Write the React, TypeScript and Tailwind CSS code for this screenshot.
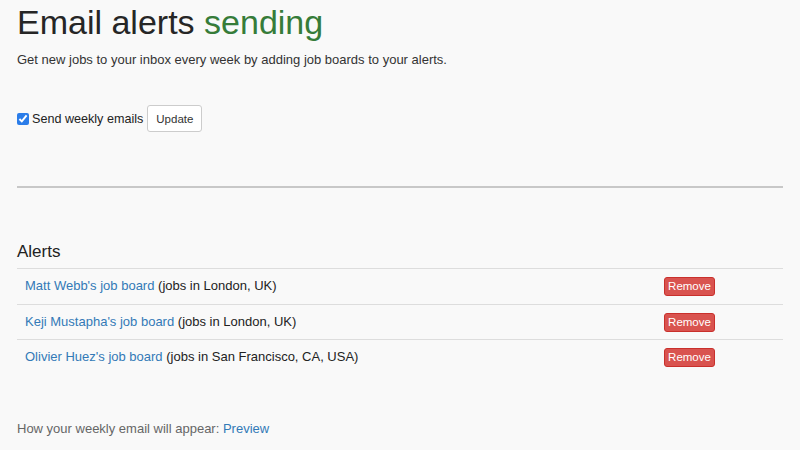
const ALERTS = [
  { name: "Matt Webb's job board", where: 'London, UK' },
  { name: "Keji Mustapha's job board", where: 'London, UK' },
  { name: "Olivier Huez's job board", where: 'San Francisco, CA, USA' },
];

export default function App() {
  return (
    <div
      className="min-h-[450px] w-full bg-[#f9f9f9] px-[17px] text-[13px] leading-[20px] text-[#333]"
      style={{ fontFamily: '"Liberation Sans", Arial, sans-serif' }}
    >
      <h1 className="pt-[2px] text-[34px] leading-[40px] text-[#262626]">
        Email alerts <span className="text-[#367c39]">sending</span>
      </h1>
      <p className="mt-[8px]">
        Get new jobs to your inbox every week by adding job boards to your alerts.
      </p>

      {/* Weekly email toggle */}
      <div className="mt-[35px] flex items-center">
        <input
          type="checkbox"
          defaultChecked
          className="mr-[3px] h-[12px] w-[12px] accent-[#2b7de9]"
        />
        <span className="text-[12.6px] text-[#222]">Send weekly emails</span>
        <button
          type="button"
          className="ml-[4px] h-[27px] rounded-[3px] border border-[#ccc] bg-white px-[8px] text-[11.5px] text-[#333]"
        >
          Update
        </button>
      </div>

      <hr className="mt-[54px] border-t-2 border-[#c8c8c8]" />

      {/* Alerts table */}
      <h2 className="mt-[53px] text-[17px] leading-[22px] text-[#222]">Alerts</h2>
      <div className="mt-[5px]">
        {ALERTS.map((a) => (
          <div
            key={a.name}
            className="grid h-[35.5px] grid-cols-[1fr_127px] items-center border-t border-[#ddd]"
          >
            <div className="px-[8px]">
              <a href="#" className="text-[#337ab7]">
                {a.name}
              </a>{' '}
              <span className="text-[#222]">(jobs in {a.where})</span>
            </div>
            <div className="px-[8px]">
              <button
                type="button"
                className="h-[19px] w-[51px] rounded-[3px] border border-[#c9302c] bg-[#d9534f] text-[11.5px] leading-[17px] text-white"
              >
                Remove
              </button>
            </div>
          </div>
        ))}
      </div>

      <p className="mt-[44px] text-[#666]">
        How your weekly email will appear:{' '}
        <a href="#" className="text-[#337ab7]">
          Preview
        </a>
      </p>
    </div>
  );
}
